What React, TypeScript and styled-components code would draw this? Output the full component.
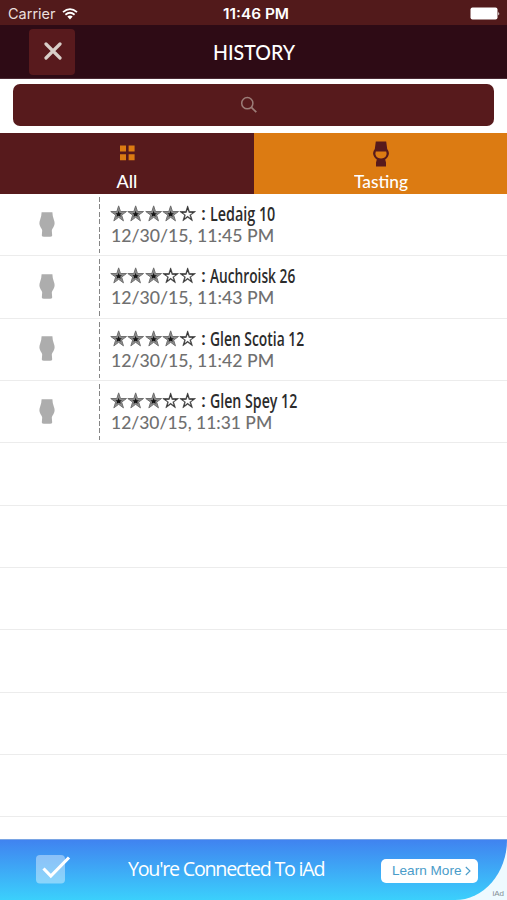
import React, { useLayoutEffect, useRef, useState } from "react";
import styled, { createGlobalStyle } from "styled-components";

const GlobalStyle = createGlobalStyle`
  * { box-sizing: border-box; }
  body { margin: 0; background: #fff; font-family: Lato, "Liberation Sans", sans-serif; }
`;

const Screen = styled.div`
  width: 507px;
  height: 900px;
  display: flex;
  flex-direction: column;
  overflow: hidden;
  background: #fff;
`;

const FitBox = styled.span<{ $width: number }>`
  display: block;
  flex: none;
  width: ${(p) => p.$width}px;
  white-space: nowrap;
`;
const FitInner = styled.span`
  display: inline-block;
  transform-origin: 0 50%;
`;

/* Condenses or widens a line of text so that it fills the given width. */
function Fit({ width, children }: { width: number; children: React.ReactNode }) {
  const ref = useRef<HTMLSpanElement>(null);
  const [scale, setScale] = useState(1);
  useLayoutEffect(() => {
    if (ref.current) setScale(width / ref.current.offsetWidth);
  }, [width]);
  return (
    <FitBox $width={width}>
      <FitInner ref={ref} style={{ transform: `scaleX(${scale})` }}>
        {children}
      </FitInner>
    </FitBox>
  );
}

const StatusBar = styled.header`
  flex: none;
  height: 25px;
  padding: 3px 7px 0 8px;
  display: grid;
  grid-template-columns: 1fr auto 1fr;
  align-items: center;
  background: #521a1b;
  color: #eadfdd;
  font: 14.5px/22px Inter, sans-serif;
`;
const Carrier = styled.div`
  display: flex;
  align-items: center;
  gap: 6px;
`;
const Clock = styled.div`
  padding-left: 4px;
  color: #fff;
  font-weight: 600;
  font-size: 14px;
`;
const BatterySlot = styled.div`
  display: flex;
  justify-content: flex-end;
  padding-bottom: 2px;
`;

const NavBar = styled.nav`
  flex: none;
  height: 54px;
  padding: 0 29px;
  display: grid;
  grid-template-columns: 46px 1fr 46px;
  align-items: center;
  justify-items: center;
  background: #2e0b15;
  border-bottom: 1px solid #4a2a34;
`;
const CloseButton = styled.button`
  width: 46px;
  height: 46px;
  padding: 0 0 2px 1px;
  border: 0;
  border-radius: 4px;
  background: #581a1d;
  display: flex;
  align-items: center;
  justify-content: center;
`;
const Title = styled.h1`
  margin: 0;
  color: #fff;
  font-size: 21px;
  font-weight: 500;
  line-height: 54px;
`;

const SearchArea = styled.div`
  flex: none;
  height: 54px;
  padding: 5px 13px 7px;
  display: flex;
`;
const SearchField = styled.div`
  flex: 1;
  border-radius: 7px;
  background: #571a1c;
  display: flex;
  align-items: center;
  justify-content: center;
  padding-right: 9px;
`;

const Tabs = styled.div`
  flex: none;
  height: 61px;
  display: grid;
  grid-template-columns: 254px 253px;
`;
const Tab = styled.button<{ $active?: boolean }>`
  border: 0;
  padding: 7px 0 0;
  background: ${(p) => (p.$active ? "#dc7b12" : "#571a1c")};
  color: #fff;
  display: flex;
  flex-direction: column;
  align-items: center;
  font: 500 18px/24px Lato, sans-serif;
`;
const TabIcon = styled.span<{ $lift?: number }>`
  height: 29px;
  padding-bottom: ${(p) => p.$lift ?? 0}px;
  display: flex;
  align-items: center;
`;

const List = styled.ul`
  flex: 1;
  min-height: 0;
  margin: 0;
  padding: 0;
  list-style: none;
  overflow: hidden;
`;
const Row = styled.li`
  height: 62.35px;
  display: flex;
  border-bottom: 1px solid #ececec;
`;
const Thumb = styled.div`
  width: 98px;
  padding: 0 4px 1px 0;
  display: flex;
  align-items: center;
  justify-content: center;
`;
const Divider = styled.div`
  width: 2px;
  margin: 3px 0 2px;
  background: repeating-linear-gradient(to bottom, #858585 0 5px, transparent 5px 7.4px) 1px 0 / 1.3px 100% no-repeat;
`;
const Details = styled.div`
  padding: 8px 0 0 10px;
`;
const NameLine = styled.div`
  height: 23px;
  display: flex;
  align-items: flex-start;
  color: #2c2c2c;
  font: 600 20.5px/22px "Open Sans", sans-serif;
`;
const Stars = styled.span`
  display: flex;
  width: 90px;
  padding-top: 3px;
`;
const Colon = styled.span`
  width: 10px;
  padding-left: 1px;
  font-size: 18px;
`;
const DateLine = styled.div`
  padding-left: 1px;
  color: #707070;
  font: 500 18px/20px Lato, sans-serif;
`;

const AdBanner = styled.footer`
  flex: none;
  height: 61px;
  position: relative;
  display: flex;
  align-items: center;
  background: #eefaff;
  isolation: isolate;
`;
const AdFill = styled.div`
  width: 507px;
  height: 61px;
  padding: 0 29px 0 35px;
  border-top: 1px solid #7aa5e4;
  border-bottom-right-radius: 52px 60px;
  background: linear-gradient(#4083f0, #3bd0fc);
  display: flex;
  align-items: center;
`;
const AdTitle = styled.div`
  margin: 0 57px 5px 57px;
  color: #fff;
  font: 400 20.5px/28px "Open Sans", sans-serif;
  letter-spacing: -1.3px;
`;
const LearnMore = styled.button`
  width: 97px;
  height: 24px;
  margin-top: 1px;
  padding: 0 0 0 10px;
  border: 0;
  border-radius: 5px;
  background: #fff;
  color: #4a9cc9;
  display: flex;
  align-items: center;
  gap: 5px;
  font: 13px/24px "Liberation Sans", sans-serif;
`;
const AdMark = styled.span`
  position: absolute;
  right: 3px;
  bottom: 1px;
  color: #858f96;
  font: 8px/10px "Liberation Sans", sans-serif;
`;

const STAR = "M9 0.8 L10.9 6.7 H17.2 L12.1 10.4 L14 16.4 L9 12.7 L4 16.4 L5.9 10.4 L0.8 6.7 H7.1Z";

function Star({ filled }: { filled: boolean }) {
  return (
    <svg width="17.3" height="17" viewBox="0 0 18 17.5">
      {filled ? (
        <>
          <path d={STAR} fill="#8c8c8c" stroke="#6c6c6c" strokeWidth="1" />
          <path d="M9 6 L10 8.4 L12.4 8.6 L10.6 10 L11.2 12.2 L9 11 L6.8 12.2 L7.4 10 L5.6 8.6 L8 8.4Z" fill="#151515" />
        </>
      ) : (
        <>
          <path d={STAR} fill="#333" stroke="#333" strokeWidth="0.6" />
          <path d="M9 5.2 L10.2 8.2 L13.4 8.3 L10.8 10.2 L11.8 13.1 L9 11.2 L6.2 13.1 L7.2 10.2 L4.6 8.3 L7.8 8.2Z" fill="#fff" stroke="#fff" strokeWidth="0.4" />
        </>
      )}
    </svg>
  );
}

function GlassSilhouette() {
  return (
    <svg width="16" height="25" viewBox="0 0 16 25">
      <path d="M2.6 0.3H13.4Q13.4 3.6 14.8 7.4Q16.6 12 14.4 15.2Q13 17 12.8 18.6L13.2 23.6Q13 24.8 11 24.8H5Q3 24.8 2.8 23.6L3.2 18.6Q3 17 1.6 15.2Q-0.6 12 1.2 7.4Q2.6 3.6 2.6 0.3Z" fill="#adadad" />
    </svg>
  );
}

function TastingGlass() {
  return (
    <svg width="18" height="26" viewBox="0 0 18 26">
      <path d="M3.8 0.5H14.2L15.2 8Q18.4 12 15.7 16Q14.4 17.8 13.2 18.6L14 21.5V25.5H4V21.5L4.8 18.6Q3.6 17.8 2.3 16Q-0.4 12 2.8 8Z" fill="#571a1c" />
      <path d="M3.8 10.4H14.2Q15.6 14.4 12.2 16.8Q9 18 5.8 16.8Q2.4 14.4 3.8 10.4Z" fill="#dc7b12" />
    </svg>
  );
}

const entries = [
  { stars: 4, name: "Ledaig 10", width: 65, time: "12/30/15, 11:45 PM", timeWidth: 163 },
  { stars: 3, name: "Auchroisk 26", width: 85, time: "12/30/15, 11:43 PM", timeWidth: 163 },
  { stars: 4, name: "Glen Scotia 12", width: 94, time: "12/30/15, 11:42 PM", timeWidth: 163 },
  { stars: 3, name: "Glen Spey 12", width: 87, time: "12/30/15, 11:31 PM", timeWidth: 161 },
];

export default function App() {
  return (
    <Screen>
      <GlobalStyle />
      <StatusBar>
        <Carrier>
          <Fit width={48}>Carrier</Fit>
          <svg width="16" height="13" viewBox="0 0 16 13">
            <path d="M1 4.2Q8-2 15 4.2M3.4 6.8Q8 2.8 12.6 6.8" fill="none" stroke="#fff" strokeWidth="1.8" />
            <path d="M5.3 8.6Q8 6.4 10.7 8.6L8 11.5Z" fill="#fff" />
          </svg>
        </Carrier>
        <Clock>
          <Fit width={66}>11:46 PM</Fit>
        </Clock>
        <BatterySlot>
          <svg width="30" height="13" viewBox="0 0 30 13">
            <rect x="0.5" y="0.5" width="27" height="12" rx="2" fill="#fff" />
            <path d="M28.3 4.5Q30 6.5 28.3 8.5Z" fill="#fff" />
          </svg>
        </BatterySlot>
      </StatusBar>
      <NavBar>
        <CloseButton aria-label="Close">
          <svg width="18" height="18" viewBox="0 0 18 18">
            <path d="M2 2L16 16M16 2L2 16" stroke="#d8cec8" strokeWidth="3.2" strokeLinecap="round" />
          </svg>
        </CloseButton>
        <Title>
          <Fit width={82}>HISTORY</Fit>
        </Title>
      </NavBar>
      <SearchArea>
        <SearchField>
          <svg width="18" height="18" viewBox="0 0 18 18">
            <circle cx="7.3" cy="7.2" r="5.6" fill="none" stroke="#9c7d78" strokeWidth="1.5" />
            <path d="M11.4 11.3L16.3 16.2" stroke="#9c7d78" strokeWidth="1.8" />
          </svg>
        </SearchField>
      </SearchArea>
      <Tabs>
        <Tab>
          <TabIcon $lift={4}>
            <svg width="16" height="16" viewBox="0 0 16 16">
              <path d="M1 0.5h6v6h-6zM9.6 0.5h6v6h-6zM1 9.3h6v6h-6zM9.6 9.3h6v6h-6z" fill="#dc7b12" />
            </svg>
          </TabIcon>
          <Fit width={21}>All</Fit>
        </Tab>
        <Tab $active>
          <TabIcon $lift={1}>
            <TastingGlass />
          </TabIcon>
          <Fit width={54}>Tasting</Fit>
        </Tab>
      </Tabs>
      <List>
        {entries.map((e) => (
          <Row key={e.name}>
            <Thumb>
              <GlassSilhouette />
            </Thumb>
            <Divider />
            <Details>
              <NameLine>
                <Stars>
                  {[0, 1, 2, 3, 4].map((i) => (
                    <Star key={i} filled={i < e.stars} />
                  ))}
                </Stars>
                <Colon>:</Colon>
                <Fit width={e.width}>{e.name}</Fit>
              </NameLine>
              <DateLine>
                <Fit width={e.timeWidth}>{e.time}</Fit>
              </DateLine>
            </Details>
          </Row>
        ))}
        {[0, 1, 2, 3, 4, 5].map((i) => (
          <Row key={i} />
        ))}
      </List>
      <AdBanner>
        <AdFill>
          <svg width="36" height="32" viewBox="0 0 36 32">
            <rect x="1" y="1" width="29" height="28.5" rx="4" fill="#fff" fillOpacity="0.4" />
            <path d="M8.5 14.5L15.8 22L34 3.5" fill="none" stroke="#fff" strokeWidth="3.2" />
          </svg>
          <AdTitle>
            <Fit width={196}>You're Connected To iAd</Fit>
          </AdTitle>
          <LearnMore>
            <Fit width={69}>Learn More</Fit>
            <svg width="6" height="10" viewBox="0 0 6 10">
              <path d="M0.8 1L5 5L0.8 9" fill="none" stroke="#4a9cc9" strokeWidth="1.1" />
            </svg>
          </LearnMore>
        </AdFill>
        <AdMark>iAd</AdMark>
      </AdBanner>
    </Screen>
  );
}
